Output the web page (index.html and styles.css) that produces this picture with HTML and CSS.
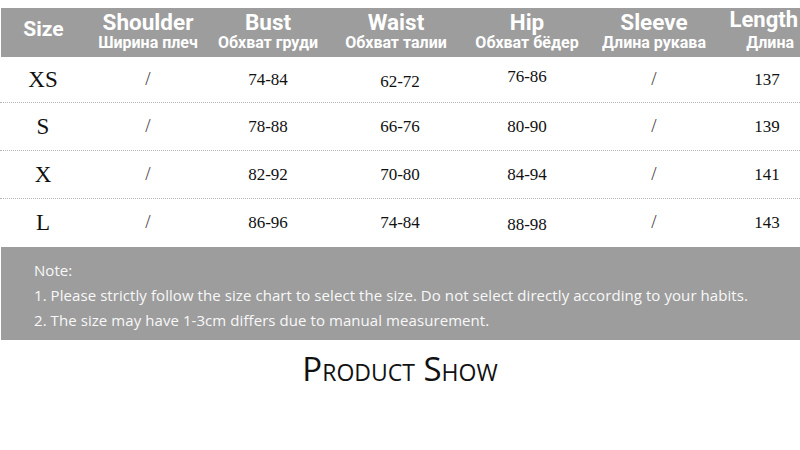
FILE: index.html
```html
<!DOCTYPE html>
<html>
<head>
<meta charset="utf-8">
<link rel="stylesheet" href="styles.css">
</head>
<body>
<div class="page">
  <div class="chart">
    <div class="row head">
      <div class="cell first"><span class="en">Size</span></div>
      <div class="cell"><span class="en">Shoulder</span><span class="ru">Ширина плеч</span></div>
      <div class="cell"><span class="en">Bust</span><span class="ru">Обхват груди</span></div>
      <div class="cell"><span class="en">Waist</span><span class="ru">Обхват талии</span></div>
      <div class="cell"><span class="en">Hip</span><span class="ru">Обхват бёдер</span></div>
      <div class="cell"><span class="en">Sleeve</span><span class="ru">Длина рукава</span></div>
      <div class="cell last"><span class="en">Length</span><span class="ru">Длина</span></div>
    </div>
    <div class="row body first">
      <div class="cell size">XS</div>
      <div class="cell slash">/</div>
      <div class="cell">74-84</div>
      <div class="cell waist low">62-72</div>
      <div class="cell high">76-86</div>
      <div class="cell slash">/</div>
      <div class="cell len">137</div>
    </div>
    <div class="row body">
      <div class="cell size">S</div>
      <div class="cell slash">/</div>
      <div class="cell">78-88</div>
      <div class="cell waist">66-76</div>
      <div class="cell">80-90</div>
      <div class="cell slash">/</div>
      <div class="cell len">139</div>
    </div>
    <div class="row body">
      <div class="cell size">X</div>
      <div class="cell slash">/</div>
      <div class="cell">82-92</div>
      <div class="cell waist">70-80</div>
      <div class="cell">84-94</div>
      <div class="cell slash">/</div>
      <div class="cell len">141</div>
    </div>
    <div class="row body lastrow">
      <div class="cell size">L</div>
      <div class="cell slash">/</div>
      <div class="cell">86-96</div>
      <div class="cell waist">74-84</div>
      <div class="cell low">88-98</div>
      <div class="cell slash">/</div>
      <div class="cell len">143</div>
    </div>
  </div>
  <div class="note">
    <p>Note:</p>
    <p>1. Please strictly follow the size chart to select the size. Do not select directly according to your habits.</p>
    <p>2. The size may have 1-3cm differs due to manual measurement.</p>
  </div>
  <h2 class="show">Product Show</h2>
</div>
</body>
</html>
```
FILE: styles.css
```css
html, body {
  margin: 0;
  padding: 0;
  background: #ffffff;
}
.page {
  width: 800px;
  height: 450px;
  overflow: hidden;
  padding-top: 8px;
  box-sizing: border-box;
}
.chart {
  width: 800px;
}
.row {
  display: grid;
  grid-template-columns: 86px 124px 116px 140px 122px 132px 80px;
  width: 800px;
}
.cell {
  display: flex;
  flex-direction: column;
  align-items: center;
  justify-content: center;
  white-space: nowrap;
}
.head {
  background: #9d9d9d;
  height: 49px;
  margin-left: 1px;
  width: 799px;
  grid-template-columns: 85px 124px 116px 140px 122px 132px 80px;
  color: #ffffff;
  font-family: Roboto, "Liberation Sans", sans-serif;
  font-weight: 700;
}
.head .cell {
  justify-content: flex-start;
  padding-top: 2px;
}
.head .en {
  font-size: 22.5px;
  line-height: 24px;
}
.head .ru {
  font-size: 16px;
  line-height: 18px;
}
.head .cell.first {
  justify-content: center;
  padding-top: 0;
  padding-bottom: 8px;
}
.head .cell.first .en {
  font-size: 21px;
}
.head .cell.last {
  align-items: flex-end;
  padding-top: 0;
  padding-right: 2px;
}
.head .last .en {
  font-size: 22px;
}
.head .last .ru {
  margin-top: 2px;
  padding-right: 4px;
}
.body {
  height: 47px;
  border-bottom: 1px dotted #b5b5b5;
  font-family: "Liberation Serif", serif;
  font-size: 17px;
  color: #111111;
}
.body.first {
  height: 45px;
}
.body.lastrow {
  border-bottom: none;
  height: 48px;
}
.body .size {
  font-size: 23px;
}
.body .slash {
  font-size: 19px;
  color: #444444;
  padding-bottom: 2px;
}
.body .waist {
  padding-left: 8px;
}
.body .len {
  padding-left: 14px;
}
.body .low {
  padding-top: 4px;
}
.body .high {
  padding-bottom: 6px;
}
.note {
  background: #9d9d9d;
  margin-left: 1px;
  height: 93px;
  box-sizing: border-box;
  padding: 11px 0 0 33px;
  color: #f8f8f8;
  font-family: "Open Sans", "Noto Sans", sans-serif;
  font-size: 15px;
  letter-spacing: 0.07px;
  line-height: 25px;
}
.note p {
  margin: 0;
}
.show {
  margin: 14px 0 0 0;
  text-align: center;
  font-family: "Open Sans", sans-serif;
  font-variant: small-caps;
  font-weight: 500;
  font-size: 33px;
  line-height: 30px;
  color: #111111;
}
```
